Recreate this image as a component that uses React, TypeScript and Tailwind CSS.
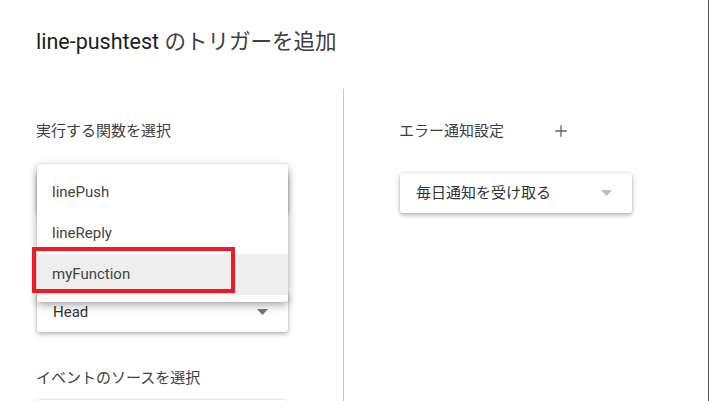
import { Plus } from "lucide-react";

const font = "font-['Roboto','Noto_Sans_CJK_JP',sans-serif]";

type SelectProps = {
  value?: string;
  width: string;
  arrow?: string;
};

function Arrow({ color }: { color: string }) {
  return (
    <svg width="11" height="6" viewBox="0 0 11 6">
      <path d="M0 0 L11 0 L5.5 6 Z" fill={color} />
    </svg>
  );
}

function Select({ value, width, arrow = "#757575" }: SelectProps) {
  return (
    <div
      className={`${width} h-[40px] bg-white rounded-[3px] flex items-center justify-between pl-[16px] pr-[20px] shadow-[0_2px_5px_rgba(0,0,0,0.3),0_0_2px_rgba(0,0,0,0.12)]`}
    >
      <span className="text-[15px] text-[#333]">{value}</span>
      <Arrow color={arrow} />
    </div>
  );
}

function Label({ text }: { text: string }) {
  return <div className="text-[15px] leading-[20px] text-[#3c4043]">{text}</div>;
}

export default function App() {
  const items = ["linePush", "lineReply", "myFunction"];

  return (
    <div className={`${font} relative w-[709px] h-[401px] bg-white overflow-hidden border-r border-[#555]`}>
      <div className="h-[89px] pt-[28px] pl-[36px] text-[21.5px] leading-[28px] text-[#202124]">
        line-pushtest <span className="text-[#3c4043]">のトリガーを追加</span>
      </div>

      <div className="flex">
        <div className="w-[343px] pl-[37px]">
          <div className="mt-[32px] -ml-[1px]">
            <Label text="実行する関数を選択" />
          </div>
          {/* select under the open menu */}
          <div className="mt-[32px]">
            <Select width="w-[251px]" />
          </div>
          <div className="mt-[26px] h-[20px]" />
          <div className="mt-[33px]">
            <Select value="Head" width="w-[251px]" />
          </div>
          <div className="mt-[36px] -ml-[1px]">
            <Label text="イベントのソースを選択" />
          </div>
          <div className="mt-[12px]">
            <Select width="w-[251px]" />
          </div>
        </div>

        <div className="flex-1 border-l border-[#c4c4c4] h-[312px] pl-[55px]">
          <div className="mt-[32px] flex items-center">
            <Label text="エラー通知設定" />
            <Plus size={18} strokeWidth={1.75} className="ml-[48px] text-[#5f6368]" />
          </div>
          <div className="mt-[32px] ml-[1px]">
            <Select value="毎日通知を受け取る" width="w-[232px]" arrow="#bdbdbd" />
          </div>
        </div>
      </div>

      <div className="absolute left-[37px] top-[164px] w-[251px] bg-white rounded-[3px] pt-[8px] pb-[7px] shadow-[0_3px_8px_rgba(0,0,0,0.35),0_0_2px_rgba(0,0,0,0.12)]">
        {items.map((item) => (
          <div
            key={item}
            className={`h-[41px] flex items-center pl-[15px] text-[15px] text-[#444] ${
              item === "myFunction" ? "bg-[#eeeeee]" : ""
            }`}
          >
            {item}
          </div>
        ))}
      </div>

      <div className="absolute left-[32px] top-[247px] w-[203px] h-[46px] border-[4px] border-[#ed1c24]" />
    </div>
  );
}
